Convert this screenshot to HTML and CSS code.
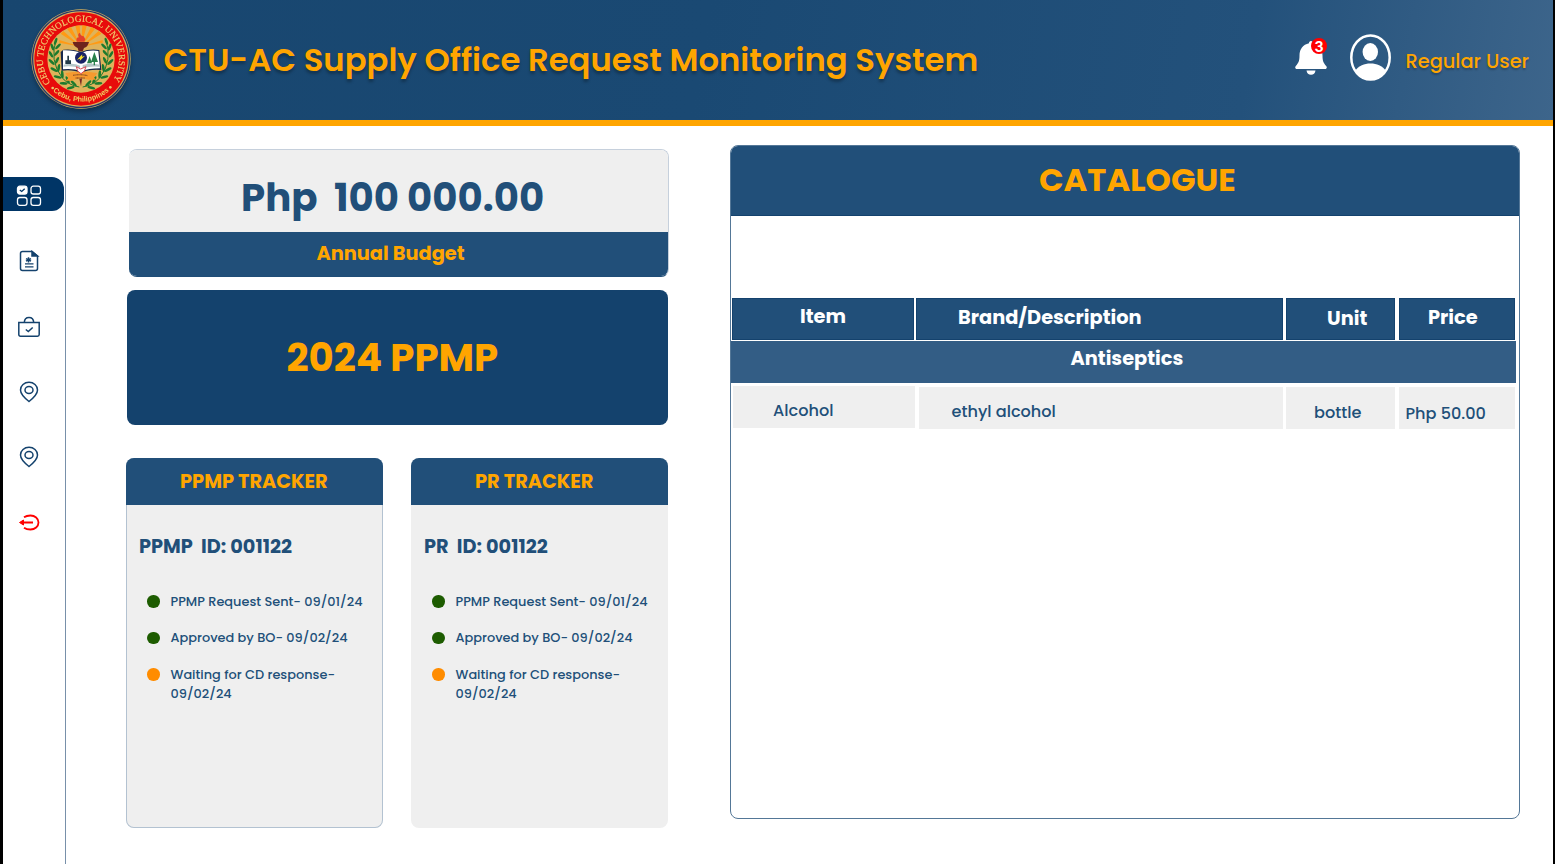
FILE: index.html
```html
<!DOCTYPE html>
<html lang="en">
<head>
<meta charset="utf-8">
<title>CTU-AC Supply Office Request Monitoring System</title>
<link rel="stylesheet" href="styles.css">
</head>
<body>
<header class="header">
  <svg class="seal" viewBox="90 22 306 312">
    <defs>
      <path id="arcTop" d="M152 246A114 114 0 1 1 334 246"/>
      <path id="arcBottom" d="M150 263A128 128 0 0 0 336 263"/>
      <g id="laurel" fill="#1c7a2d">
        <path d="M170 112Q146 180 187 232Q207 254 238 259" fill="none" stroke="#1c7a2d" stroke-width="3"/>
        <ellipse cx="167" cy="122" rx="4" ry="11" transform="rotate(18 167 122)"/><ellipse cx="174" cy="137" rx="4" ry="11" transform="rotate(45 174 137)"/>
        <ellipse cx="157" cy="139" rx="4" ry="11" transform="rotate(-20 157 139)"/><ellipse cx="170" cy="157" rx="4" ry="11" transform="rotate(40 170 157)"/>
        <ellipse cx="153" cy="161" rx="4" ry="11" transform="rotate(-30 153 161)"/><ellipse cx="171" cy="179" rx="4" ry="11" transform="rotate(25 171 179)"/>
        <ellipse cx="155" cy="184" rx="4" ry="12" transform="rotate(-45 155 184)"/><ellipse cx="176" cy="202" rx="4" ry="12" transform="rotate(10 176 202)"/>
        <ellipse cx="162" cy="207" rx="4" ry="12" transform="rotate(-60 162 207)"/><ellipse cx="187" cy="221" rx="4" ry="12" transform="rotate(-5 187 221)"/>
        <ellipse cx="173" cy="229" rx="4" ry="12" transform="rotate(-75 173 229)"/><ellipse cx="203" cy="238" rx="4" ry="12" transform="rotate(-25 203 238)"/>
        <ellipse cx="191" cy="248" rx="4" ry="12" transform="rotate(-88 191 248)"/><ellipse cx="221" cy="248" rx="4" ry="12" transform="rotate(-45 221 248)"/>
        <ellipse cx="212" cy="261" rx="4" ry="12" transform="rotate(-105 212 261)"/>
      </g>
    </defs>
    <circle cx="243" cy="175" r="149" fill="#d9b25e"/>
    <circle cx="243" cy="175" r="145" fill="none" stroke="#27356b" stroke-width="4"/>
    <circle cx="243" cy="175" r="140" fill="#e80b0b"/>
    <circle cx="243" cy="175" r="101" fill="#dfb35b"/>
    <path fill="#ff9a14" d="M243 138L178 118V126ZM243 138L182 99L190 91ZM243 138L201 84L213 79ZM243 138L226 76L239 74ZM243 138L247 74L260 76ZM243 138L273 79L285 84ZM243 138L296 91L304 99ZM243 138L308 118V126Z"/>
    <use href="#laurel"/><use href="#laurel" transform="translate(486 0) scale(-1 1)"/>
    <path d="M218 124H267Q263 140 252 142L248 152H236L233 142Q221 138 218 124Z" fill="#6e251d"/>
    <path d="M230 123Q227 110 237 110Q231 100 240 96Q241 106 251 107L256 116L253 123Z" fill="#e4402b"/>
    <path d="M196 217Q243 209 292 217L282 231L289 237H266L243 232L215 240H198L205 231Z" fill="#f69a2f"/>
    <path d="M219 224Q242 220 263 225M227 232H255" stroke="#6c3520" stroke-width="3" stroke-dasharray="3 1" fill="none"/>
    <path d="M182 154L190 147Q222 144 243 154Q267 144 298 148L304 208Q267 205 243 217Q221 206 185 210Z" fill="#17284d"/>
    <path d="M189 149Q221 148 243 157Q267 147 295 151L300 203Q266 203 243 212Q221 203 189 206Z" fill="#fff"/>
    <path d="M191 192Q221 185 240 195V202Q216 195 190 198ZM248 193Q273 186 299 192V198Q270 196 248 202Z" fill="#b6c6c8"/>
    <path d="M196 190V179H202V165H207V179H213V190Z" fill="#233a47"/>
    <path d="M261 188L269 166L276 188ZM273 184L283 154L294 184ZM281 180H285V194H281Z" fill="#28804b"/>
    <circle cx="243" cy="171" r="18" fill="#172266"/><path d="M231 177L247 161L246 168L255 165L239 181L240 174Z" fill="#f8e22b"/>
    <path d="M229 198L242 205L258 198L253 211L243 219L233 211Z" fill="#fff" stroke="#d94a57" stroke-width="3"/>
    <path d="M238 234H246L243 257Z" fill="#7b2520"/>
    <text class="seal-name"><textPath href="#arcTop" textLength="496" lengthAdjust="spacing">CEBU TECHNOLOGICAL UNIVERSITY</textPath></text>
    <text class="seal-place" text-anchor="middle"><textPath href="#arcBottom" startOffset="50%">Cebu, Philippines</textPath></text>
    <circle cx="158" cy="262" r="4" fill="#e7c96d"/><circle cx="331" cy="260" r="4" fill="#e7c96d"/>
  </svg>
  <h1 class="title"><span>CTU-AC Supply Office Request Monitoring System</span></h1>
  <div class="bell">
    <svg viewBox="0 0 32 34"><path d="M16 0C14.7 0 14 1 14 2.2C8 3.5 4.5 8 4.5 14.5C4.5 20 3.5 22 .8 25C-.4 26.5.3 28 2 28H30C31.7 28 32.4 26.5 31.2 25C28.5 22 27.5 20 27.5 14.5C27.5 8 24 3.5 18 2.2C18 1 17.3 0 16 0ZM11.5 29.5H20.5C20 32.5 18.5 33.7 16 33.7S12 32.5 11.5 29.5Z" fill="#fff"/></svg>
    <b class="badge">3</b>
  </div>
  <svg class="avatar" viewBox="0 0 41 47"><ellipse cx="20.5" cy="23.5" rx="19.2" ry="22" fill="none" stroke="#fff" stroke-width="2.5"/><ellipse cx="20.3" cy="18" rx="7.7" ry="9" fill="#fff"/><path d="M5 37C9 31.500 14 29.500 20.500 29.500S32 31.500 36 37C31.500 43.500 26.500 46 20.500 46S9.500 43.500 5 37Z" fill="#fff"/></svg>
  <div class="user"><span>Regular User</span></div>
</header>
<div class="body">
  <nav class="sidebar">
    <a class="nav-item active"><svg viewBox="0 0 26 22" fill="none" stroke="#fff" stroke-width="1.3"><rect x="1.500" y="1.200" width="9.500" height="7.800" rx="2.300" fill="#fff"/><path d="M3.800 5L5.700 6.500L8.700 3.700" stroke="#003566"/><rect x="15" y="1.200" width="9.500" height="7.800" rx="2.300"/><rect x="1.500" y="12.500" width="9.500" height="7.800" rx="2.300"/><rect x="15" y="12.500" width="9.500" height="7.800" rx="2.300"/></svg></a>
    <a class="nav-item"><svg viewBox="0 0 26 22" fill="none" stroke="#14426d" stroke-width="1.500"><path d="M16 1.500H6.500Q4.500 1.500 4.500 3.500V18.500Q4.500 20.500 6.500 20.500H19.500Q21.500 20.500 21.500 18.500V6Z"/><path d="M16 1.500V6H21.500Z" fill="#14426d"/><path d="M9 13.800H17.500M9 16.800H17.500" stroke-width="1.300"/><path d="M12.500 7.300V12.500M10 8.600L15 11.200M15 8.600L10 11.200"/></svg></a>
    <a class="nav-item"><svg viewBox="0 0 26 22" fill="none" stroke="#14426d" stroke-width="1.500"><path d="M2.800 6.500H23.200V18.500Q23.200 20.200 21.500 20.200H4.500Q2.800 20.200 2.800 18.500Z"/><path d="M8.300 6.500Q8.500 1.500 13 1.500T17.700 6.500M9.800 13.500L12.300 15.500L16.700 11.500"/></svg></a>
    <a class="nav-item"><svg viewBox="0 0 26 22" fill="none" stroke="#14426d" stroke-width="1.500"><path d="M13 20.500Q4.500 13.800 4.500 9A8.500 7.700 0 0 1 21.500 9Q21.500 13.800 13 20.500Z"/><ellipse cx="13" cy="9" rx="4" ry="3.500"/></svg></a>
    <a class="nav-item"><svg viewBox="0 0 26 22" fill="none" stroke="#14426d" stroke-width="1.500"><path d="M13 20.500Q4.500 13.800 4.500 9A8.500 7.700 0 0 1 21.500 9Q21.500 13.800 13 20.500Z"/><ellipse cx="13" cy="9" rx="4" ry="3.500"/></svg></a>
    <a class="nav-item"><svg viewBox="0 0 26 22" fill="none" stroke="#f00" stroke-width="1.800"><path d="M8 6.200Q10.500 4.500 14.500 4.500A8 7 0 0 1 14.500 18.500Q10.500 18.500 8 16.800M5 11.500H17"/><path d="M3.500 11.500L7.500 9V14Z" fill="#f00" stroke-width="1"/></svg></a>
  </nav>
  <main class="main">
    <section class="overview">
      <div class="budget"><div class="amount"><span>Php&nbsp; 100 000.00</span></div><div class="budget-label"><span>Annual Budget</span></div></div>
      <div class="plan"><span>2024 PPMP</span></div>
      <div class="trackers">
        <article class="tracker outlined"><h2 class="th-ppmp"><span>PPMP TRACKER</span></h2><h3><span>PPMP&nbsp; ID: 001122</span></h3>
          <ul><li><i></i><span>PPMP Request Sent- 09/01/24</span></li><li><i></i><span>Approved by BO- 09/02/24</span></li><li class="pending"><i></i><div><span>Waiting for CD response-</span><br><span>09/02/24</span></div></li></ul></article>
        <article class="tracker"><h2 class="th-pr"><span>PR TRACKER</span></h2><h3><span>PR&nbsp; ID: 001122</span></h3>
          <ul><li><i></i><span>PPMP Request Sent- 09/01/24</span></li><li><i></i><span>Approved by BO- 09/02/24</span></li><li class="pending"><i></i><div><span>Waiting for CD response-</span><br><span>09/02/24</span></div></li></ul></article>
      </div>
    </section>
    <section class="catalogue">
      <h2 class="cat-title"><span>CATALOGUE</span></h2>
      <div class="row head"><div class="item"><span>Item</span></div><div class="brand"><span>Brand/Description</span></div><div class="unit"><span>Unit</span></div><div class="price"><span>Price</span></div></div>
      <div class="group"><span>Antiseptics</span></div>
      <div class="row data"><div class="item"><span>Alcohol</span></div><div class="brand"><span>ethyl alcohol</span></div><div class="unit"><span>bottle</span></div><div class="price"><span>Php 50.00</span></div></div>
    </section>
  </main>
</div>
</body>
</html>
```
FILE: styles.css
```css
* { box-sizing: border-box; }
body { margin: 0; height: 864px; overflow: hidden; border-left: 3px solid #000; border-right: 2px solid #000; background: #fff; color: #214f79; font-family: Poppins, Inter, "Open Sans", sans-serif; }
h1, h2, h3, ul { margin: 0; padding: 0; }
span { white-space: nowrap; }
.header { height: 126px; display: flex; align-items: flex-start; border-bottom: 6px solid #ffa500; background: linear-gradient(100deg, #18466f 0%, #1a4973 45%, #23517b 80%, #3d658b 100%); color: #ffa500; }
.seal { width: 102px; height: 104px; margin: 7.500px 0 0 27px; filter: drop-shadow(0 3px 2px rgba(0,0,0,.3)); }
.seal-name { font: 28px "Liberation Serif", serif; fill: #f0cf70; stroke: #f0cf70; stroke-width: .5px; }
.seal-place { font: bold 22px "Liberation Sans", sans-serif; fill: #f0cd62; }
.title { width: 817px; margin: 30px 0 0 31.500px; font-size: 32.250px; line-height: 60px; font-weight: 600; text-shadow: 0 3px 3px rgba(0,0,0,.28); }
.bell { position: relative; width: 32px; height: 34px; margin: 41px 0 0 314.500px; }
.bell svg { display: block; width: 32px; height: 34px; }
.badge { position: absolute; left: 16px; top: -3.500px; width: 16px; height: 16px; border-radius: 50%; background: #f00; color: #fff; font: bold 14px/17px Inter, sans-serif; text-align: center; }
.avatar { width: 41px; height: 47px; margin: 34px 0 0 22.500px; }
.user { margin: 42px 0 0 15px; font-size: 19.350px; line-height: 40px; font-weight: 500; text-shadow: 0 2px 2px rgba(0,0,0,.25); }
.body { display: flex; height: 738px; }
.sidebar { width: 63px; margin-top: 2px; padding-top: 49px; border-right: 1px solid #7890aa; display: flex; flex-direction: column; gap: 31.300px; }
.nav-item { height: 34px; padding: 8px 0 0 13px; }
.nav-item svg { display: block; width: 26px; height: 22px; }
.active { width: 61px; background: #003566; border-radius: 0 12px 12px 0; }
.main { display: flex; align-items: flex-start; padding: 19px 0 0 60.500px; }
.overview { width: 542px; margin-top: 4px; }
.budget { height: 128px; margin-left: 2px; width: 540px; border-radius: 8px; overflow: hidden; border: 1px solid #c6d0dc; border-bottom-color: #1f4d77; border-left: 0; }
.amount { height: 82px; padding: 14px 0 0 112.500px; background: #efefef; font-weight: 700; font-size: 38.700px; line-height: 67px; }
.budget-label { height: 46px; padding: 2px 0 0 188px; background: #214f79; color: #ffa500; font-weight: 700; font-size: 19.350px; line-height: 40px; }
.plan { width: 541px; height: 135px; margin: 13px 0 33px; padding-left: 160px; border-radius: 8px; background: #14426d; color: #ffa500; font-size: 38.700px; line-height: 136px; font-weight: 700; }
.trackers { display: flex; gap: 28.500px; margin-left: -.500px; }
.tracker { width: 256.500px; height: 370px; border-radius: 8px; overflow: hidden; background: #efefef; }
.outlined { box-shadow: inset 0 0 0 1px #b3c2d1; }
.tracker h2 { height: 47px; background: #214f79; color: #ffa500; font-size: 19.350px; line-height: 48px; font-weight: 700; }
.th-ppmp { padding-left: 54px; }
.th-pr { padding-left: 64px; }
.tracker h3 { padding: 22px 0 0 13px; font-size: 19.300px; line-height: 40px; font-weight: 700; }
.tracker ul { list-style: none; padding: 24.500px 0 0 21px; }
.tracker li { display: flex; height: 36.500px; font-size: 12.900px; line-height: 19.350px; font-weight: 500; }
.tracker li i { flex: none; width: 12.500px; height: 12.500px; margin: 3.500px 11px 0 0; border-radius: 50%; background: #1d5c00; }
.tracker .pending i { background: #ff8c00; }
.catalogue { width: 790px; height: 674px; margin-left: 61.500px; border: 1px solid #547797; border-radius: 8px; overflow: hidden; }
.cat-title { height: 69.500px; padding-left: 308px; background: #214f79; border-bottom: 1px solid #14426d; color: #ffa500; font-size: 32.250px; line-height: 68px; font-weight: 700; margin-bottom: 82.500px; }
.row { display: grid; grid-template-columns: 182px 367px 109px 116px; }
.head { margin-left: 1px; column-gap: 2px; color: #fff; font-size: 19.350px; font-weight: 700; line-height: 38px; }
.head > div { height: 42px; background: #214f79; border: 1px solid #14426d; }
.head .item { padding-left: 67px; line-height: 36px; }
.head .brand { padding-left: 41px; line-height: 37px; }
.head .unit { margin: 0 -1px 0 1px; padding-left: 40px; line-height: 40px; }
.head .price { margin: 0 -3px 0 3px; padding-left: 28px; line-height: 37px; }
.group { width: 784.500px; height: 42px; margin-top: 1px; padding-left: 339.500px; background: #335d85; color: #fff; font-size: 19.350px; line-height: 36px; font-weight: 700; }
.data { grid-template-columns: 182px 364px 109px 116px; column-gap: 4px; margin: 3px 0 0 2px; font-size: 16.125px; line-height: 50px; font-weight: 500; }
.data > div { height: 42px; background: #efefef; }
.data .item { padding-left: 40px; line-height: 50px; }
.data .brand { margin-top: 1px; padding-left: 32.500px; }
.data .unit { margin: 1px 1px 0 -1px; padding-left: 28px; line-height: 51px; }
.data .price { margin: 1px 1px 0 -1px; padding-left: 6.500px; line-height: 54px; }
```
